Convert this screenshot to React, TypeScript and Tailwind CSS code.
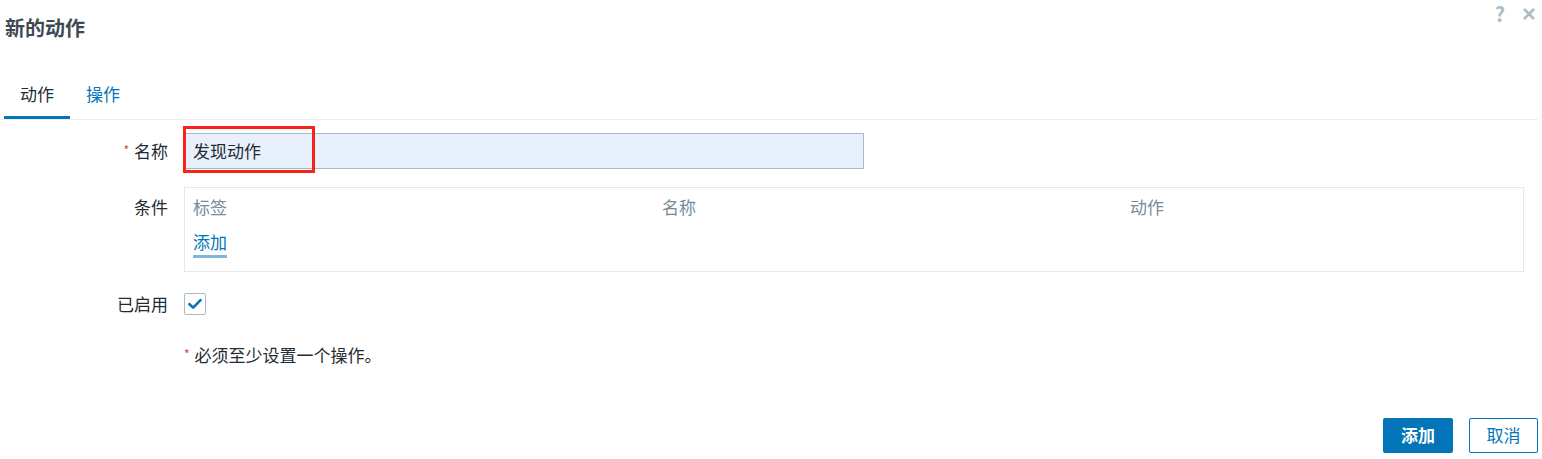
import React from "react";

const font = { fontFamily: '"Noto Sans CJK SC", "Noto Sans", sans-serif' };

function Checkbox() {
  return (
    <span className="flex h-[22px] w-[22px] items-center justify-center rounded-[2px] border border-[#acbbc2] bg-white">
      <svg width="14" height="12" viewBox="0 0 14 12" fill="none">
        <path d="M1.5 6.2 5.2 9.6 12.5 2.2" stroke="#0275b8" strokeWidth="2.6" strokeLinecap="round" strokeLinejoin="round" />
      </svg>
    </span>
  );
}

function Row({ label, required, children, alignTop }: { label: string; required?: boolean; children: React.ReactNode; alignTop?: boolean }) {
  return (
    <div className={`flex gap-4 ${alignTop ? "items-start" : "items-center"}`}>
      <div className={`flex w-[168px] shrink-0 items-center justify-end text-[17px] text-[#1f2c33] ${alignTop ? "pt-[7px]" : ""}`}>
        {required && <span className="mr-[5px] mt-[-2px] text-[12px] leading-none text-[#e33734]">*</span>}
        {label}
      </div>
      {children}
    </div>
  );
}

export default function App() {
  return (
    <div className="h-[459px] w-[1542px] overflow-hidden bg-white text-[#1f2c33]" style={font}>
      {/* header */}
      <div className="flex h-[56px] items-start justify-between">
        <h1 className="pl-[5px] pt-[13px] text-[20px] font-bold leading-[30px] text-[#3d4a54]">新的动作</h1>
        <div className="flex items-center gap-[17px] pr-[6px] pt-[2px] text-[20px] leading-[24px] text-[#acbbc2]">
          <span className="font-bold">?</span>
          <svg width="14" height="14" viewBox="0 0 14 14">
            <path d="M2 2 12 12M12 2 2 12" stroke="#acbbc2" strokeWidth="2.6" />
          </svg>
        </div>
      </div>

      {/* tabs */}
      <div className="mr-[4px] flex border-b border-[#ebeef0] pt-[22px]">
        <div className="ml-[4px] border-b-[3px] border-[#0275b8] px-4 pb-[6px] text-[17px] leading-[32px] text-[#1f2c33]">动作</div>
        <div className="px-4 pb-[6px] text-[17px] leading-[32px] text-[#0275b8]">操作</div>
      </div>

      {/* form */}
      <div className="flex flex-col pt-[13px]">
        <Row label="名称" required>
          <div className="relative">
            <div className="flex h-[36px] w-[680px] items-center border border-[#acbbc2] bg-[#e8f0fe] px-[8px] text-[17px] text-[#1f2c33]">
              发现动作
            </div>
            <div className="absolute left-[-1px] top-[-7px] h-[47px] w-[132px] border-[3px] border-[#f5231a]" />
          </div>
        </Row>

        <div className="mt-[18px]">
          <Row label="条件" alignTop>
            <div className="h-[85px] w-[1340px] border border-[#e5e8ea] px-[8px] pt-[5px]">
              <div className="grid grid-cols-[469px_468px_1fr] text-[17px] leading-[28px] text-[#768d99]">
                <span>标签</span>
                <span>名称</span>
                <span>动作</span>
              </div>
              <div className="mt-[9px]">
                <span className="border-b-[3px] border-[#7cb7de] pb-[1px] text-[17px] leading-[24px] text-[#0275b8]">添加</span>
              </div>
            </div>
          </Row>
        </div>

        <div className="mt-[19px]">
          <Row label="已启用">
            <Checkbox />
          </Row>
        </div>

        <div className="ml-[184px] mt-[26px] flex items-center text-[17px] leading-[24px]">
          <span className="mr-[5px] mt-[-2px] text-[12px] leading-none text-[#e33734]">*</span>
          必须至少设置一个操作。
        </div>
      </div>

      {/* footer */}
      <div className="mt-[51px] flex justify-end gap-4 pr-[4px]">
        <button className="h-[35px] w-[70px] rounded-[2px] bg-[#0275b8] text-[17px] font-bold text-white">添加</button>
        <button className="h-[35px] w-[69px] rounded-[2px] border border-[#0275b8] bg-white text-[17px] text-[#0275b8]">取消</button>
      </div>
    </div>
  );
}
